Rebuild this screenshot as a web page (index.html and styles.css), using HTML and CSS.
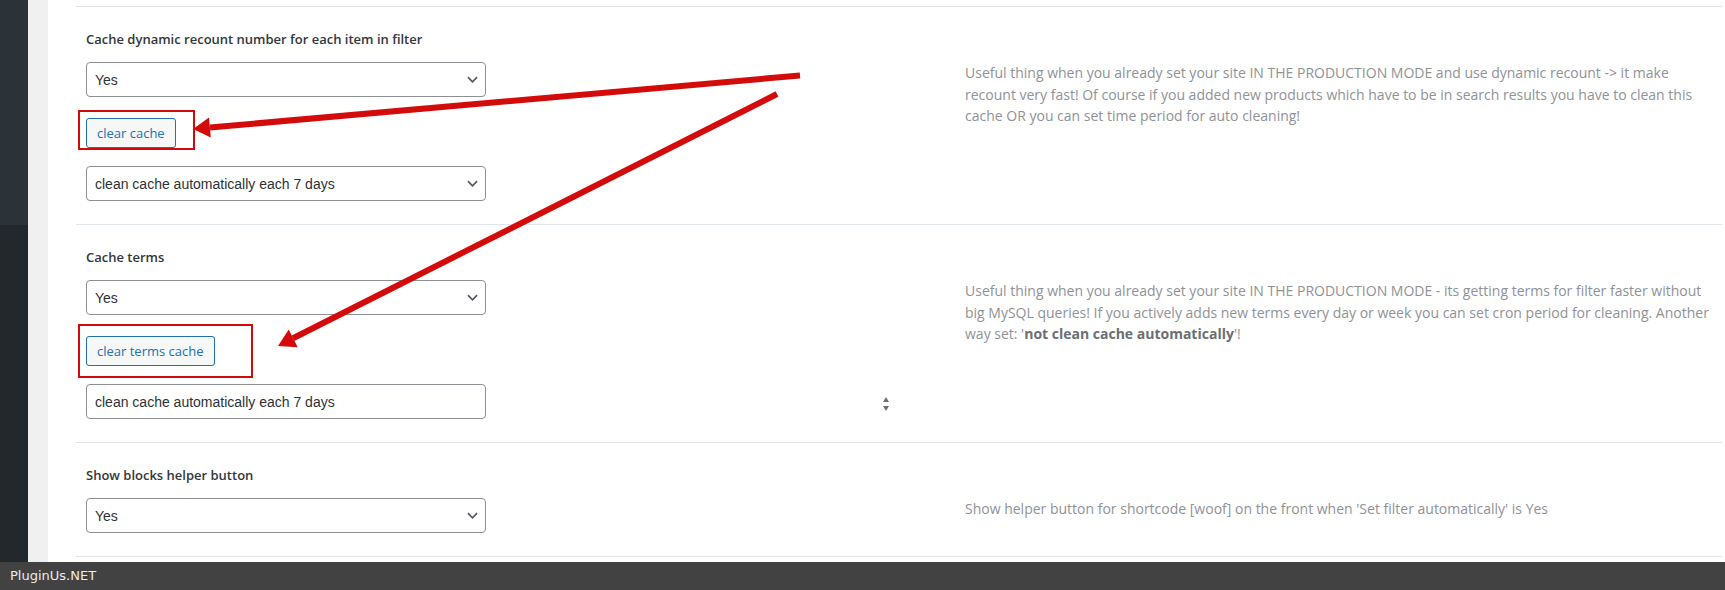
FILE: index.html
```html
<!DOCTYPE html>
<html lang="en">
<head>
  <meta charset="UTF-8" />
  <title>Filter Settings - Cache</title>
  <link rel="stylesheet" href="styles.css">
</head>
<body>
  <div class="screen">
    <aside class="adminmenu"></aside>
    <div class="gutter"></div>

    <main class="panel">
      <div class="row row-prev"></div>

      <!-- Dynamic recount cache -->
      <section class="row">
        <div class="field">
          <h4 class="label">Cache dynamic recount number for each item in filter</h4>
          <div class="select-wrap">
            <select><option>Yes</option><option>No</option></select>
            <svg class="chev" viewBox="0 0 12 7"><path d="M1 1l5 5 5-5" /></svg>
          </div>
          <div class="btn-wrap">
            <button class="btn">clear cache</button>
            <span class="mark mark-1"></span>
          </div>
          <div class="select-wrap">
            <select><option>clean cache automatically each 7 days</option></select>
            <svg class="chev" viewBox="0 0 12 7"><path d="M1 1l5 5 5-5" /></svg>
          </div>
        </div>
        <p class="desc">Useful thing when you already set your site IN THE PRODUCTION MODE and use dynamic recount -&gt; it make recount very fast! Of course if you added new products which have to be in search results you have to clean this cache OR you can set time period for auto cleaning!</p>
      </section>

      <!-- Terms cache -->
      <section class="row">
        <div class="field">
          <h4 class="label">Cache terms</h4>
          <div class="select-wrap">
            <select><option>Yes</option><option>No</option></select>
            <svg class="chev" viewBox="0 0 12 7"><path d="M1 1l5 5 5-5" /></svg>
          </div>
          <div class="btn-wrap">
            <button class="btn">clear terms cache</button>
            <span class="mark mark-2"></span>
          </div>
          <div class="num-row">
            <input class="input" type="text" value="clean cache automatically each 7 days" readonly />
            <svg class="spin" viewBox="0 0 6 14"><path d="M3 0l3 5H0z" /><path d="M0 9h6l-3 5z" /></svg>
          </div>
        </div>
        <p class="desc">Useful thing when you already set your site IN THE PRODUCTION MODE - its getting terms for filter faster without big MySQL queries! If you actively adds new terms every day or week you can set cron period for cleaning. Another way set: '<b>not clean cache automatically</b>'!</p>
      </section>

      <!-- Helper button -->
      <section class="row">
        <div class="field">
          <h4 class="label">Show blocks helper button</h4>
          <div class="select-wrap">
            <select><option>Yes</option><option>No</option></select>
            <svg class="chev" viewBox="0 0 12 7"><path d="M1 1l5 5 5-5" /></svg>
          </div>
        </div>
        <p class="desc">Show helper button for shortcode [woof] on the front when 'Set filter automatically' is Yes</p>
      </section>
    </main>

    <!-- annotation arrows -->
    <svg class="arrows" viewBox="0 0 1725 562">
      <line x1="800" y1="75.5" x2="210" y2="127.5" />
      <polygon points="193,129 210.8,137.5 209,117.5" />
      <line x1="777" y1="94" x2="293" y2="338.3" />
      <polygon points="278,346 297.7,347.3 288.7,329.4" />
    </svg>
  </div>

  <footer class="credit">PluginUs.NET</footer>
</body>
</html>
```

FILE: styles.css
```css
body {
  margin: 0;
  font-family: 'Open Sans', sans-serif;
  color: #3c434a;
  background: #fff;
}
.screen {
  position: relative;
  display: flex;
  height: 562px;
  overflow: hidden;
}
.adminmenu {
  width: 28px;
  background: linear-gradient(#2c3338 0 225px, #23282d 225px);
}
.gutter {
  width: 20px;
  background: #f0f0f1;
}
.panel {
  flex: 1;
  background: #fff;
  padding: 0 3px 0 28px;
}
.row {
  display: grid;
  grid-template-columns: 879px 1fr;
  padding: 23px 0 23px 10px;
  border-bottom: 1px solid #e0e5e9;
}
.row-prev {
  height: 7px;
  padding: 0;
  box-sizing: border-box;
}
.label {
  margin: 0 0 14px;
  font-size: 13px;
  line-height: 18px;
  font-weight: 600;
  color: #32373c;
}
.select-wrap {
  position: relative;
  width: 400px;
}
select, .input {
  display: block;
  width: 400px;
  height: 35px;
  margin: 0;
  padding: 0 24px 0 8px;
  box-sizing: border-box;
  border: 1px solid #8c8f94;
  border-radius: 4px;
  background: #fff;
  color: #2c3338;
  font-family: 'Liberation Sans', Arial, sans-serif;
  font-size: 14px;
  appearance: none;
  -webkit-appearance: none;
  outline: none;
}
.chev {
  position: absolute;
  right: 8px;
  top: 14px;
  width: 11px;
  height: 7px;
  fill: none;
  stroke: #50575e;
  stroke-width: 1.8;
  pointer-events: none;
}
.btn-wrap {
  position: relative;
  width: fit-content;
  margin: 21px 0 18px;
}
.btn {
  display: block;
  height: 30px;
  padding: 0 10px;
  border: 1px solid #2271b1;
  border-radius: 3px;
  background: #f6f7f7;
  color: #2271b1;
  font-family: 'Open Sans', sans-serif;
  font-size: 13px;
  line-height: 28px;
  cursor: pointer;
}
.mark {
  position: absolute;
  border: 2px solid #d10a0a;
  pointer-events: none;
}
.mark-1 {
  left: -8px;
  top: -8px;
  right: -19px;
  bottom: -2px;
}
.mark-2 {
  left: -8px;
  top: -12px;
  right: -38px;
  bottom: -12px;
}
.num-row {
  display: flex;
  align-items: flex-start;
}
.spin {
  width: 6px;
  height: 14px;
  margin: 13px 0 0 397px;
  fill: #6c7176;
}
.desc {
  margin: 32px 0 0;
  padding-right: 4px;
  font-size: 14px;
  line-height: 21.5px;
  color: #8f9297;
}
.desc b {
  color: #6b6f74;
  font-weight: 700;
}
.arrows {
  position: absolute;
  left: 0;
  top: 0;
  width: 1725px;
  height: 562px;
  pointer-events: none;
}
.arrows line {
  stroke: #d40b0b;
  stroke-width: 6;
}
.arrows polygon {
  fill: #d40b0b;
}
.credit {
  height: 28px;
  padding-left: 10px;
  background: #424242;
  color: #ececec;
  font-family: 'DejaVu Sans', sans-serif;
  font-size: 13px;
  line-height: 28px;
}
```
